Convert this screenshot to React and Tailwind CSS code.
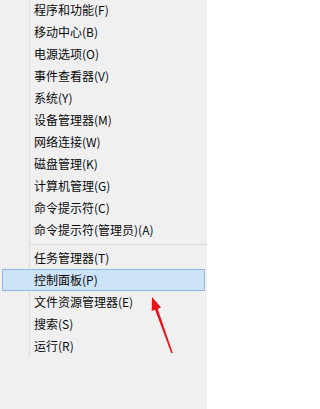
import React from 'react';

const ITEMS_ARRIBA = [
  '程序和功能(F)', '移动中心(B)', '电源选项(O)', '事件查看器(V)', '系统(Y)',
  '设备管理器(M)', '网络连接(W)', '磁盘管理(K)', '计算机管理(G)',
  '命令提示符(C)', '命令提示符(管理员)(A)'
];

const ITEMS_ABAJO = ['任务管理器(T)', '控制面板(P)', '文件资源管理器(E)', '搜索(S)', '运行(R)'];

const Item = ({ texto, activo }) => {
  if (activo) {
    return (
      <div className="mx-[2px] h-[22px] flex items-center border border-[#8fb8e6] bg-[#cde3f7] pl-[31px]">
        {texto}
      </div>
    );
  }
  return (
    <div className="flex h-[22px] items-stretch">
      <div className="ml-[2px] w-[28px] border-r border-[#dedede]" />
      <div className="flex items-center pl-[4px]">{texto}</div>
    </div>
  );
};

const App = () => {
  return (
    <div
      className="relative w-[207px] h-[409px] overflow-hidden bg-[#f0f0f0] text-[12px] text-[#0a0a0a]"
      style={{ fontFamily: '"Noto Sans CJK SC", "Noto Sans", sans-serif' }}
    >
      <div className="flex flex-col -mt-px">
        {ITEMS_ARRIBA.map(t => <Item key={t} texto={t} />)}

        {/* separador */}
        <div className="flex h-[6px] items-stretch">
          <div className="ml-[2px] w-[28px] border-r border-[#dedede]" />
          <div className="flex-1 flex items-center">
            <div className="w-full h-px bg-[#d9d9d9]" />
          </div>
        </div>

        {ITEMS_ABAJO.map(t => <Item key={t} texto={t} activo={t === '控制面板(P)'} />)}
      </div>

      {/* flecha roja */}
      <svg className="absolute left-0 top-0" width="207" height="409" viewBox="0 0 207 409">
        <polygon
          points="152,297 161.1,307.5 157.7,308.7 172.7,352.8 171.3,353.2 155.1,309.7 151.7,310.9"
          fill="#e8121a"
        />
      </svg>
    </div>
  );
};

export default App;
